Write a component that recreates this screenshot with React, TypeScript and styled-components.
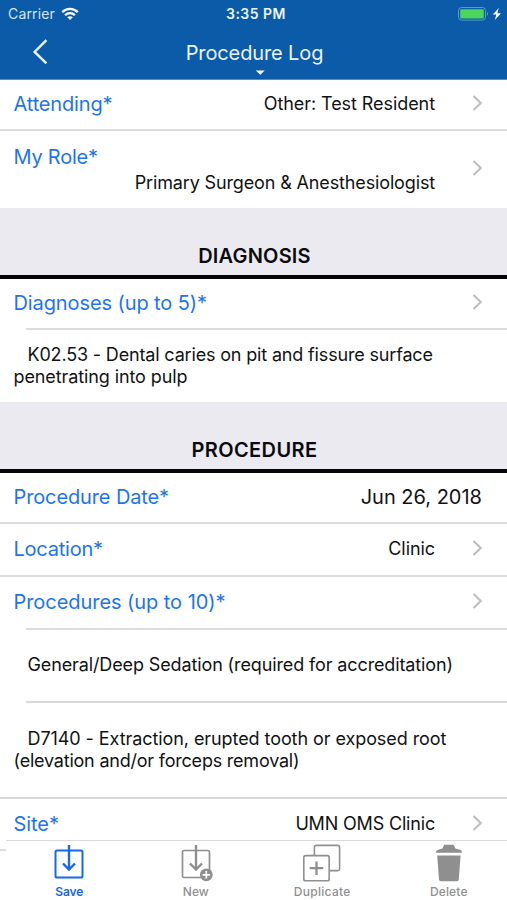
import React from 'react';
import styled, { createGlobalStyle } from 'styled-components';

const GlobalStyle = createGlobalStyle`
  * { box-sizing: border-box; }
  body { margin: 0; background: #fff; }
`;

const Screen = styled.div`
  width: 507px;
  height: 900px;
  display: flex;
  flex-direction: column;
  overflow: hidden;
  background: #fff;
  color: #121214;
  font-family: Inter, "Liberation Sans", sans-serif;
`;

const Header = styled.header`
  flex: none;
  height: 80px;
  background: #0b5ba9;
  border-bottom: 1px solid #6c87a3;
  color: #eaf4ff;
`;

const StatusBar = styled.div`
  display: grid;
  grid-template-columns: 1fr auto 1fr;
  align-items: center;
  height: 27px;
  padding: 0 5px 0 8px;
`;

const Carrier = styled.div`
  display: flex;
  align-items: center;
  gap: 6px;
  font-size: 14px;
  letter-spacing: 0.15px;
  color: #d3e6fa;
`;

const Clock = styled.div`
  padding-left: 2px;
  font-size: 14px;
  font-weight: 600;
  letter-spacing: 0.5px;
`;

const Power = styled.div`
  display: flex;
  justify-content: flex-end;
`;

const NavBar = styled.div`
  display: grid;
  grid-template-columns: 1fr auto 1fr;
  height: 52px;
`;

const BackButton = styled.button`
  justify-self: start;
  align-self: start;
  display: flex;
  margin: 12px 0 0 32px;
  padding: 0;
  border: 0;
  background: none;
  color: inherit;
`;

const TitleButton = styled.button`
  display: flex;
  flex-direction: column;
  align-items: center;
  padding: 14px 0 0 2px;
  border: 0;
  background: none;
  color: inherit;
  font: 400 20px/24px Inter, sans-serif;
  letter-spacing: -0.12px;
  svg { margin-left: 10px; }
`;

const Form = styled.main`
  flex: none;
  height: 760px;
  overflow: hidden;
`;

const Row = styled.div<{ $height: number; $inset?: boolean; $last?: boolean }>`
  display: flex;
  align-items: center;
  height: ${p => p.$height}px;
  padding: 0 24px 0 13.5px;
  background: linear-gradient(#dcdcde, #dcdcde) no-repeat ${p => (p.$inset ? '26px' : '0')} 100% / 100%
    ${p => (p.$last ? '0' : '2px')};
`;

const Field = styled.div<{ $stacked?: boolean }>`
  flex: 1;
  display: flex;
  flex-direction: ${p => (p.$stacked ? 'column' : 'row')};
  justify-content: space-between;
  align-items: ${p => (p.$stacked ? 'stretch' : 'center')};
  padding-bottom: ${p => (p.$stacked ? 0 : 3)}px;
`;

const Label = styled.span<{ $track?: number }>`
  font-size: 20px;
  line-height: 26px;
  letter-spacing: ${p => p.$track ?? -0.12}px;
  color: #1d74f2;
`;

const Value = styled.span<{ $large?: boolean; $track?: number }>`
  font-size: ${p => (p.$large ? 20 : 18)}px;
  line-height: 26px;
  letter-spacing: ${p => p.$track ?? -0.12}px;
  text-align: right;
  margin-right: ${p => (p.$large ? 1 : 0)}px;
`;

const Disclosure = styled.span<{ $lift: number }>`
  display: flex;
  margin-left: 37px;
  padding-bottom: ${p => p.$lift}px;
`;

const Section = styled.h2<{ $height: number; $track: number }>`
  display: flex;
  align-items: flex-end;
  justify-content: center;
  height: ${p => p.$height}px;
  margin: 0;
  padding: 0 0 7px 2px;
  background: #ebeaf0;
  border-bottom: 4px solid #050608;
  font-size: 20px;
  line-height: 24px;
  font-weight: 600;
  letter-spacing: ${p => p.$track}px;
  color: #0b0b0d;
`;

const Entry = styled.div<{ $height: number; $top: number; $line?: 'inset' | 'full' }>`
  height: ${p => p.$height}px;
  padding: ${p => p.$top}px 0 0 13.5px;
  font-size: 18px;
  line-height: 22px;
  background: linear-gradient(#d9d9db, #d9d9db) no-repeat ${p => (p.$line === 'full' ? '0' : '26px')} 100% / 100%
    ${p => (p.$line ? '2px' : '0')};
`;

const EntryLine = styled.div<{ $first?: boolean; $track: number }>`
  padding-left: ${p => (p.$first ? 14 : 0)}px;
  letter-spacing: ${p => p.$track}px;
  white-space: nowrap;
`;

const TabBar = styled.nav`
  flex: none;
  display: grid;
  grid-template-columns: 126.5px 126.5px 126.5px 126.5px;
  height: 60px;
  padding-left: 6px;
  background: linear-gradient(#dadadc, #dadadc) no-repeat 6px 0 / 100% 1px,
    linear-gradient(#dadadc, #dadadc) no-repeat 0 9px / 6px 2px;
`;

const Tab = styled.button<{ $active?: boolean; $track: number }>`
  display: flex;
  flex-direction: column;
  align-items: center;
  padding: 4px 0 0;
  border: 0;
  background: none;
  color: ${p => (p.$active ? '#1669ee' : '#8f8f8f')};
  font: ${p => (p.$active ? 600 : 500)} 12px/16px Inter, sans-serif;
  letter-spacing: ${p => p.$track}px;
  svg { margin-bottom: 2px; }
`;

const Chevron = ({ lift = 6 }: { lift?: number }) => (
  <Disclosure $lift={lift}>
    <svg width="11" height="18" viewBox="0 0 11 18" fill="none" stroke="#bdbdc0" strokeWidth="2">
      <path d="M1.5 2 8.8 9 1.5 16" />
    </svg>
  </Disclosure>
);

const WifiIcon = () => (
  <svg width="18" height="14" viewBox="0 0 18 14" fill="none" stroke="#fff" strokeWidth="2.3">
    <path d="M1.2 5.1C5.8.8 12.2.8 16.8 5.1" />
    <path d="M4.1 8.2C7 5.5 11 5.5 13.9 8.2" />
    <path d="M9 13 6.2 10.2C7.8 8.8 10.2 8.8 11.8 10.2Z" fill="#fff" stroke="none" />
  </svg>
);

const BatteryIcon = () => (
  <svg width="46" height="16" viewBox="0 0 46 16">
    <rect x="2.5" y="1.5" width="27" height="12.6" rx="3" fill="none" stroke="#5d98cf" />
    <rect x="4.2" y="3.2" width="23.6" height="9.2" rx="1.2" fill="#4bd659" />
    <path d="M31 5.7Q33 7.8 31 9.9Z" fill="#5d98cf" />
    <path d="M42.8 2 36.8 8.6H40.4L38.8 14 45 7.2H41.4Z" fill="#fff" />
  </svg>
);

const SaveIcon = ({ plus }: { plus?: boolean }) => (
  <svg width="34" height="38" viewBox="0 0 34 38" fill="none" stroke="currentColor" strokeWidth={plus ? 1.7 : 2}>
    <rect x="3.5" y="6.5" width="27" height="27" rx="1.6" />
    <path d="M17 1V26" strokeWidth="2.4" />
    <path d="M11 19.5 17 25.6 23 19.5" strokeWidth="2.4" />
    {plus && (
      <>
        <circle cx="27.3" cy="30.8" r="6.4" fill="currentColor" stroke="none" />
        <path d="M27.3 27V34.6M23.5 30.8H31.1" stroke="#fff" strokeWidth="1.7" />
      </>
    )}
  </svg>
);

const DuplicateIcon = () => (
  <svg width="40" height="38" viewBox="0 0 40 38" fill="none" stroke="currentColor" strokeWidth="1.6">
    <path d="M12.4 11V3A1.8 1.8 0 0 1 14.2 1.4H35.8A1.8 1.8 0 0 1 37.6 3V25A1.8 1.8 0 0 1 35.8 26.6H28" />
    <rect x="1.8" y="11.6" width="25.4" height="25.2" rx="1.8" />
    <path d="M14.5 17.4V31M7.7 24.2H21.3" strokeWidth="2.3" />
  </svg>
);

const TrashIcon = () => (
  <svg width="28" height="38" viewBox="0 0 28 38" fill="currentColor">
    <path d="M9.2.8H18.6L20.4 4.6 25.4 6Q27 6.6 27 8.8H.8Q.8 6.6 2.4 6L7.4 4.6Z" />
    <path d="M2.2 11.6H25.6L23.8 35.4Q23.6 37.2 22 37.2H5.8Q4.2 37.2 4 35.4Z" />
  </svg>
);

export default function App() {
  return (
    <>
      <GlobalStyle />
      <Screen>
        <Header>
          <StatusBar>
            <Carrier>Carrier<WifiIcon /></Carrier>
            <Clock>3:35 PM</Clock>
            <Power><BatteryIcon /></Power>
          </StatusBar>
          <NavBar>
            <BackButton aria-label="Back">
              <svg width="16" height="26" viewBox="0 0 16 26" fill="none" stroke="currentColor" strokeWidth="2.4">
                <path d="M14.4 1.2 2.6 12.9 14.4 24.4" />
              </svg>
            </BackButton>
            <TitleButton>
              Procedure Log
              <svg width="10" height="12" viewBox="0 0 10 12"><path d="M.8 5.4H9.8L5.3 9.8Z" fill="#fff" /></svg>
            </TitleButton>
          </NavBar>
        </Header>
        <Form>
          <Row $height={51}>
            <Field><Label $track={-0.16}>Attending*</Label><Value $track={-0.07}>Other: Test Resident</Value></Field>
            <Chevron />
          </Row>
          <Row $height={77} $last>
            <Field $stacked><Label $track={-0.23}>My Role*</Label><Value $track={-0.14}>Primary Surgeon &amp; Anesthesiologist</Value></Field>
            <Chevron lift={3} />
          </Row>
          <Section $height={71} $track={0.2}>DIAGNOSIS</Section>
          <Row $height={51} $inset>
            <Field><Label $track={-0.1}>Diagnoses (up to 5)*</Label></Field>
            <Chevron />
          </Row>
          <Entry $height={72} $top={14}>
            <EntryLine $first $track={-0.163}>K02.53 - Dental caries on pit and fissure surface</EntryLine>
            <EntryLine $track={-0.1}>penetrating into pulp</EntryLine>
          </Entry>
          <Section $height={71} $track={0.38}>PROCEDURE</Section>
          <Row $height={51}>
            <Field><Label>Procedure Date*</Label><Value $large $track={0}>Jun 26, 2018</Value></Field>
          </Row>
          <Row $height={53}>
            <Field><Label $track={-0.23}>Location*</Label><Value $track={-0.07}>Clinic</Value></Field>
            <Chevron />
          </Row>
          <Row $height={53} $inset>
            <Field><Label $track={-0.055}>Procedures (up to 10)*</Label></Field>
            <Chevron />
          </Row>
          <Entry $height={73} $top={24} $line="inset">
            <EntryLine $first $track={-0.12}>General/Deep Sedation (required for accreditation)</EntryLine>
          </Entry>
          <Entry $height={96} $top={25} $line="full">
            <EntryLine $first $track={-0.073}>D7140 - Extraction, erupted tooth or exposed root</EntryLine>
            <EntryLine $track={-0.214}>(elevation and/or forceps removal)</EntryLine>
          </Entry>
          <Row $height={53} $last>
            <Field><Label $track={-0.05}>Site*</Label><Value $track={-0.175}>UMN OMS Clinic</Value></Field>
            <Chevron />
          </Row>
        </Form>
        <TabBar>
          <Tab $active $track={-0.1}><SaveIcon />Save</Tab>
          <Tab $track={0}><SaveIcon plus />New</Tab>
          <Tab $track={0.29}><DuplicateIcon />Duplicate</Tab>
          <Tab $track={0.15}><TrashIcon />Delete</Tab>
        </TabBar>
      </Screen>
    </>
  );
}
